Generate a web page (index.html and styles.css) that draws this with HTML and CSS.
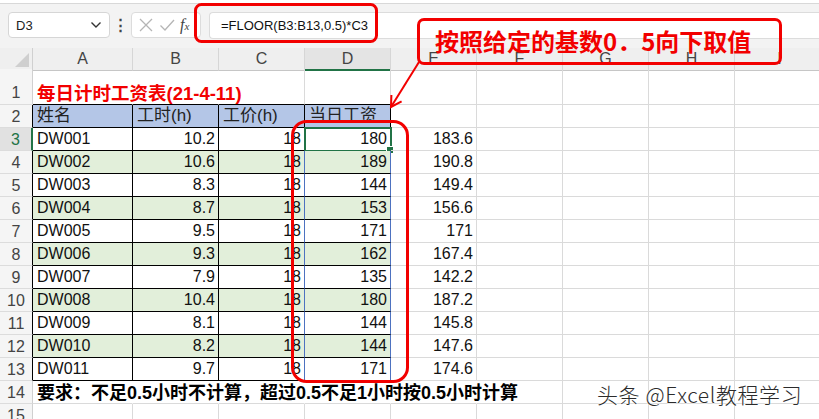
FILE: index.html
```html
<!DOCTYPE html>
<html lang="zh-CN">
<head>
    <meta charset="UTF-8">
    <title>FLOOR</title>
    <link rel="stylesheet" href="styles.css">
</head>
<body>
    <!-- 顶部 -->
    <div class="topbar"></div>
    <div class="fbar">
        <div class="namebox">
            <span>D3</span>
            <svg width="12" height="8" viewBox="0 0 12 8"><path d="M1.5 1.5 L6 6 L10.5 1.5" fill="none" stroke="#333" stroke-width="1.4"/></svg>
        </div>
        <div class="dots">⋮</div>
        <div class="fxbox">
            <svg width="16" height="16" viewBox="0 0 16 16"><path d="M2 2 L14 14 M14 2 L2 14" stroke="#b5b5b5" stroke-width="1.3"/></svg>
            <svg width="16" height="16" viewBox="0 0 16 16"><path d="M1.5 8.5 L6 13 L15 3" fill="none" stroke="#b5b5b5" stroke-width="1.3"/></svg>
            <span class="fx">f<i>x</i></span>
        </div>
        <div class="formula">=FLOOR(B3:B13,0.5)*C3</div>
    </div>

    <!-- 表格 -->
    <div class="sheet">
        <div class="row hdr">
            <div class="rh corner"><span class="tri"></span></div>
            <div class="ch">A</div><div class="ch">B</div><div class="ch">C</div><div class="ch cur">D</div>
            <div class="ch">E</div><div class="ch">F</div><div class="ch">G</div><div class="ch">H</div><div class="ch">I</div>
        </div>
        <div class="row r1">
            <div class="rh">1</div>
            <div class="c tb nr title">每日计时工资表(21-4-11)</div><div class="c tb nr"></div><div class="c tb"></div><div class="c tb"></div>
            <div class="c"></div><div class="c"></div><div class="c"></div><div class="c"></div><div class="c"></div>
        </div>
        <div class="row">
            <div class="rh k">2</div>
            <div class="c b head">姓名</div><div class="c b head">工时(h)</div><div class="c b head">工价(h)</div><div class="c b head">当日工资</div>
            <div class="c"></div><div class="c"></div><div class="c"></div><div class="c"></div><div class="c"></div>
        </div>
        <div class="row">
            <div class="rh k on">3</div>
            <div class="c b">DW001</div><div class="c b n">10.2</div><div class="c b n bl">18</div><div class="c b n bl sel">180</div>
            <div class="c n">183.6</div><div class="c"></div><div class="c"></div><div class="c"></div><div class="c"></div>
        </div>
        <div class="row g">
            <div class="rh k">4</div>
            <div class="c b">DW002</div><div class="c b n">10.6</div><div class="c b n bl">18</div><div class="c b n bl">189</div>
            <div class="c n">190.8</div><div class="c"></div><div class="c"></div><div class="c"></div><div class="c"></div>
        </div>
        <div class="row">
            <div class="rh k">5</div>
            <div class="c b">DW003</div><div class="c b n">8.3</div><div class="c b n bl">18</div><div class="c b n bl">144</div>
            <div class="c n">149.4</div><div class="c"></div><div class="c"></div><div class="c"></div><div class="c"></div>
        </div>
        <div class="row g">
            <div class="rh k">6</div>
            <div class="c b">DW004</div><div class="c b n">8.7</div><div class="c b n bl">18</div><div class="c b n bl">153</div>
            <div class="c n">156.6</div><div class="c"></div><div class="c"></div><div class="c"></div><div class="c"></div>
        </div>
        <div class="row">
            <div class="rh k">7</div>
            <div class="c b">DW005</div><div class="c b n">9.5</div><div class="c b n bl">18</div><div class="c b n bl">171</div>
            <div class="c n">171</div><div class="c"></div><div class="c"></div><div class="c"></div><div class="c"></div>
        </div>
        <div class="row g">
            <div class="rh k">8</div>
            <div class="c b">DW006</div><div class="c b n">9.3</div><div class="c b n bl">18</div><div class="c b n bl">162</div>
            <div class="c n">167.4</div><div class="c"></div><div class="c"></div><div class="c"></div><div class="c"></div>
        </div>
        <div class="row">
            <div class="rh k">9</div>
            <div class="c b">DW007</div><div class="c b n">7.9</div><div class="c b n bl">18</div><div class="c b n bl">135</div>
            <div class="c n">142.2</div><div class="c"></div><div class="c"></div><div class="c"></div><div class="c"></div>
        </div>
        <div class="row g">
            <div class="rh k">10</div>
            <div class="c b">DW008</div><div class="c b n">10.4</div><div class="c b n bl">18</div><div class="c b n bl">180</div>
            <div class="c n">187.2</div><div class="c"></div><div class="c"></div><div class="c"></div><div class="c"></div>
        </div>
        <div class="row">
            <div class="rh k">11</div>
            <div class="c b">DW009</div><div class="c b n">8.1</div><div class="c b n bl">18</div><div class="c b n bl">144</div>
            <div class="c n">145.8</div><div class="c"></div><div class="c"></div><div class="c"></div><div class="c"></div>
        </div>
        <div class="row g">
            <div class="rh k">12</div>
            <div class="c b">DW010</div><div class="c b n">8.2</div><div class="c b n bl">18</div><div class="c b n bl">144</div>
            <div class="c n">147.6</div><div class="c"></div><div class="c"></div><div class="c"></div><div class="c"></div>
        </div>
        <div class="row">
            <div class="rh k">13</div>
            <div class="c b">DW011</div><div class="c b n">9.7</div><div class="c b n bl">18</div><div class="c b n bl">171</div>
            <div class="c n">174.6</div><div class="c"></div><div class="c"></div><div class="c"></div><div class="c"></div>
        </div>
        <div class="row">
            <div class="rh">14</div>
            <div class="c nr note">要求：不足0.5小时不计算，超过0.5不足1小时按0.5小时计算</div><div class="c nr"></div><div class="c nr"></div><div class="c nr"></div><div class="c nr"></div>
            <div class="c"></div><div class="c"></div><div class="c"></div><div class="c"></div>
        </div>
        <div class="row">
            <div class="rh">15</div>
            <div class="c"></div><div class="c"></div><div class="c"></div><div class="c"></div><div class="c"></div>
            <div class="c"></div><div class="c"></div><div class="c"></div><div class="c"></div>
        </div>
    </div>

    <!-- 标注 -->
    <svg class="marks" width="819" height="419" viewBox="0 0 819 419">
        <rect x="195.5" y="4.5" width="181" height="37" rx="6" fill="none" stroke="#f20000" stroke-width="3"/>
        <rect x="292.5" y="121.5" width="115" height="260" rx="14" fill="none" stroke="#f20000" stroke-width="3"/>
        <path d="M419 62 L391 107" stroke="#f20000" stroke-width="2" fill="none"/>
        <path d="M391.4 95 L391 107 L401.6 101.3" stroke="#f20000" stroke-width="2" fill="none"/>
    </svg>
    <div class="callout">按照给定的基数0．5向下取值</div>
    <div class="watermark">头条 @Excel教程学习</div>
</body>
</html>
```

FILE: styles.css
```css
* {
    box-sizing: border-box;
}

body {
    margin: 0;
    width: 819px;
    height: 419px;
    overflow: hidden;
    position: relative;
    background: #fff;
    font-family: "Liberation Sans", "Noto Sans CJK SC", sans-serif;
    color: #111;
}

.topbar {
    height: 4px;
    background: #fff;
    border-bottom: 1px solid #d8d8d8;
}

.fbar {
    height: 44px;
    background: #f3f3f3;
    display: flex;
    align-items: flex-start;
    padding-top: 8px;
}

.namebox {
    margin-left: 8px;
    width: 102px;
    height: 26px;
    background: #fff;
    border: 1px solid #d6d6d6;
    border-radius: 4px;
    display: flex;
    align-items: center;
    justify-content: space-between;
    padding: 0 7px 0 7px;
    font-size: 13px;
    color: #222;
}

.dots {
    width: 21px;
    text-align: center;
    font-size: 15px;
    line-height: 26px;
    color: #444;
    font-weight: bold;
}

.fxbox {
    width: 70px;
    height: 26px;
    background: #fff;
    border: 1px solid #dcdcdc;
    border-radius: 4px;
    display: flex;
    align-items: center;
    gap: 5px;
    padding-left: 6px;
}

.fx {
    font-family: "Liberation Serif", serif;
    font-style: italic;
    font-size: 16px;
    color: #444;
}

.fx i {
    font-size: 11px;
}

.formula {
    margin-left: 8px;
    flex: 1;
    height: 27px;
    background: #fff;
    border: 1px solid #dcdcdc;
    border-right: none;
    border-radius: 4px 0 0 4px;
    padding-left: 11px;
    font-size: 13px;
    line-height: 25px;
    color: #111;
}

/* 表格 */
.row {
    display: grid;
    grid-template-columns: 33px 100px 86px 86px 86px 86px 86px 86px 86px 90px;
    height: 23px;
}

.row.hdr {
    height: 21px;
}

.row.r1 {
    height: 36px;
}

.rh {
    background: #f5f5f5;
    border-right: 1px solid #d0d0d0;
    border-bottom: 1px solid #dcdcdc;
    display: flex;
    align-items: center;
    justify-content: center;
    font-size: 16px;
    color: #444;
    padding-top: 2px;
}

.r1 .rh {
    align-items: flex-end;
    padding-bottom: 2px;
}

.rh.k {
    border-right-color: #000;
}

.rh.on {
    background: #e1e1e1;
    color: #217346;
    border-right: 2px solid #217346;
}

.corner {
    background: #efefef;
    border-bottom: 1px solid #c6c6c6;
    align-items: flex-end;
    justify-content: flex-end;
    padding: 0 3px 3px 0;
}

.tri {
    width: 0;
    height: 0;
    border-left: 14px solid transparent;
    border-bottom: 14px solid #cfcfcf;
}

.ch {
    background: #efefef;
    border-right: 1px solid #d6d6d6;
    border-bottom: 1px solid #c6c6c6;
    text-align: center;
    font-size: 16px;
    line-height: 21px;
    color: #444;
}

.ch.cur {
    background: #e4e4e4;
    border-bottom: 2px solid #217346;
}

.c {
    border-right: 1px solid #dadada;
    border-bottom: 1px solid #dadada;
    display: flex;
    align-items: flex-end;
    padding: 0 3px 1px 4px;
    font-size: 16px;
    line-height: 20px;
    white-space: nowrap;
    position: relative;
}

.c.n {
    justify-content: flex-end;
}

.c.nr {
    border-right-color: transparent;
}

.c.tb {
    border-bottom-color: #000;
}

.c.b {
    border-right-color: #000;
    border-bottom-color: #000;
}

.c.bl {
    border-right-color: #4d72c0;
}

.row.g .c.b {
    background: #e2efda;
}

.c.head {
    background: #b4c6e7;
    font-size: 17px;
    color: #222;
}

.c.title {
    color: #f20000;
    font-weight: bold;
    font-size: 18.5px;
    padding-bottom: 0;
}

.c.note {
    font-weight: bold;
    font-size: 18px;
    color: #000;
    padding-bottom: 0;
}

.c.sel {
    outline: 2px solid #217346;
    outline-offset: -1px;
}

.c.sel::after {
    content: "";
    position: absolute;
    right: -4px;
    bottom: -4px;
    width: 6px;
    height: 6px;
    background: #217346;
    border: 1px solid #fff;
}

/* 标注 */
.marks {
    position: absolute;
    left: 0;
    top: 0;
    pointer-events: none;
}

.callout {
    position: absolute;
    left: 417px;
    top: 18px;
    width: 365px;
    height: 47px;
    border: 3px solid #f20000;
    border-radius: 7px;
    padding-left: 15px;
    font-family: "Noto Sans CJK SC", sans-serif;
    font-weight: bold;
    font-size: 24px;
    line-height: 40px;
    color: #f20000;
}

.watermark {
    position: absolute;
    left: 597px;
    top: 379px;
    font-family: "Noto Sans CJK SC", sans-serif;
    font-weight: 300;
    font-size: 21px;
    letter-spacing: 0.6px;
    color: #2b2b2b;
    text-shadow: 0 0 2px #fff, 0 0 2px #fff;
}
```
